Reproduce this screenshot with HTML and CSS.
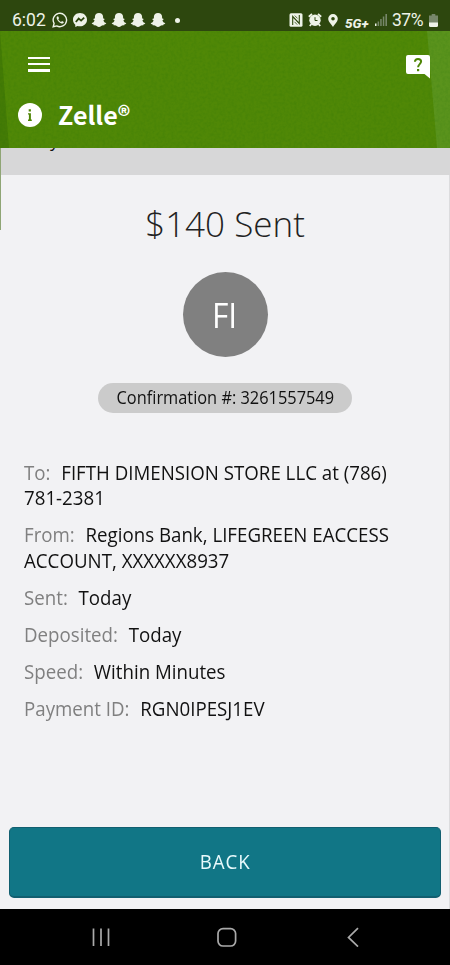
FILE: index.html
```html
<!DOCTYPE html>
<html lang="en">
<head>
    <meta charset="UTF-8">
    <meta name="viewport" content="width=device-width, initial-scale=1.0">
    <title>Zelle</title>
    <link rel="stylesheet" href="styles.css">
</head>
<body>
    <svg width="0" height="0" class="defs">
        <symbol id="snap" viewBox="0 0 16 16">
            <path d="M8 1C5.5 1 3.9 2.6 3.9 4.8V6.4C3.1 6.3 2.4 6.6 2.4 7.2S3.6 8 3.6 8.4C3.2 9.6 2.2 10.7 .8 11.1C.6 12 1.8 12.3 2.6 12.5L2.9 13.4C4.3 13.2 5 13.4 5.8 14C7.1 15.2 8.9 15.2 10.2 14C11 13.4 11.7 13.2 13.1 13.4L13.4 12.5C14.2 12.3 15.4 12 15.2 11.1C13.8 10.7 12.8 9.6 12.4 8.4C12.4 8 13.6 7.7 13.6 7.2S12.9 6.3 12.1 6.4V4.8C12.1 2.6 10.5 1 8 1Z"/>
        </symbol>
    </svg>

    <div class="status-bar">
        <div class="status-left">
            <span class="time">6:02</span>
            <svg class="icon whatsapp" viewBox="0 0 16 16">
                <path d="M1.2 14.8L2.1 11.4A6.7 6.7 0 1 1 4.7 13.9Z" fill="none" stroke="#eef3e8" stroke-width="1.4"/>
                <path d="M5.6 4.3C4.6 4.7 4.4 5.8 4.9 7C5.8 9.2 7.4 10.7 9.5 11.4C10.6 11.7 11.7 11.1 11.8 9.9L10 9L9.1 9.9C7.7 9.3 6.9 8.5 6.3 7.2L7 6.3L6.3 4.4Z"/>
            </svg>
            <svg class="icon messenger" viewBox="0 0 16 16">
                <path d="M8 1C4 1 1 3.9 1 7.7C1 9.8 1.9 11.5 3.3 12.7V15L5.5 14C10.3 15.4 15 12.3 15 7.7C15 3.9 12 1 8 1Z"/>
                <path d="M3.8 10L6.7 6.6L9.1 8.6L12.2 5.6" fill="none" stroke="#2d470e" stroke-width="1.8"/>
            </svg>
            <svg class="icon snap"><use href="#snap"/></svg>
            <svg class="icon snap"><use href="#snap"/></svg>
            <svg class="icon snap"><use href="#snap"/></svg>
            <svg class="icon snap"><use href="#snap"/></svg>
            <span class="dot"></span>
        </div>
        <div class="status-right">
            <svg class="nfc" viewBox="0 0 14 14">
                <rect x=".5" y=".3" width="13" height="13.4" rx="1.5"/>
                <path d="M3.7 12V3.5L10.3 10.5V2" fill="none" stroke="#2d470e" stroke-width="1.1"/>
                <path d="M5.8 2.6L8.5 5.4M5.5 8.8L8.2 11.6" fill="none" stroke="#2d470e" stroke-width=".8"/>
            </svg>
            <svg class="alarm" viewBox="0 0 14 14">
                <circle cx="7" cy="7.2" r="5.7"/>
                <path d="M.8 3.8L4 1M13.2 3.8L10 1M3.2 11.3L1.8 13M10.8 11.3L12.2 13" stroke="#eef3e8" stroke-width="1.8"/>
                <path d="M7 4.2V7.5H9.5" fill="none" stroke="#2d470e" stroke-width="1"/>
            </svg>
            <svg class="pin" viewBox="0 0 10 13">
                <path fill-rule="evenodd" d="M5 0A4.8 4.8 0 0 0 .2 4.8C.2 7.8 3.5 10.5 5 13C6.5 10.5 9.8 7.8 9.8 4.8A4.8 4.8 0 0 0 5 0ZM5 3A1.8 1.8 0 1 1 5 6.6A1.8 1.8 0 0 1 5 3Z"/>
            </svg>
            <span class="network">5G+</span>
            <svg class="signal" viewBox="0 0 12 12">
                <path d="M0 9.5H1.5V12H0Z"/>
                <path class="dim" d="M2.6 7.5H4.1V12H2.6ZM5.2 5H6.7V12H5.2ZM7.8 2.5H9.3V12H7.8ZM10.4 0H12V12H10.4Z"/>
            </svg>
            <span class="percent">37%</span>
            <svg class="battery" viewBox="0 0 9 13">
                <path class="dim" d="M2.7 0H6.3V1.5H9V9H0V1.5H2.7Z"/>
                <path d="M0 8.5H9V11.5Q9 13 7.5 13H1.5Q0 13 0 11.5Z"/>
            </svg>
        </div>
    </div>

    <div class="header">
        <svg class="shade" viewBox="0 0 450 117">
            <filter id="grain" x="0" y="0" width="100%" height="100%">
                <feTurbulence type="fractalNoise" baseFrequency="0.35" numOctaves="2" seed="4"/>
                <feColorMatrix values="0 0 0 0 0  0 0 0 0 0.1  0 0 0 0 0  0.2 0 0 0 -0.07"/>
            </filter>
            <path d="M0 0L9 117H0Z" fill="#447b05"/>
            <path d="M427 0H450V117H437Z" fill="#5a931c"/>
            <rect width="450" height="117" filter="url(#grain)"/>
        </svg>
        <div class="toolbar">
            <div class="menu"><span></span><span></span><span></span></div>
            <svg class="help" viewBox="0 0 24 24">
                <path d="M2 0H22Q24 0 24 2V23.5L18.5 19H2Q0 19 0 17V2Q0 0 2 0Z" fill="#fff"/>
                <path d="M8.9 6.8C9 4.9 10.2 3.9 12 3.9C13.9 3.9 15.1 5 15.1 6.6C15.1 9 12.1 9.3 12.1 12.2" fill="none" stroke="#4e8505" stroke-width="2"/>
                <rect x="11" y="14" width="2.2" height="2.2" fill="#4e8505"/>
            </svg>
        </div>
        <div class="title-row">
            <svg class="info" viewBox="0 0 24 24">
                <circle cx="12" cy="12" r="12" fill="#fff"/>
                <path d="M10.7 6.3H12.9V8.4H10.7ZM10 10.2H12.9V16.6H13.8V18H10V16.6H10.9V11.6H10Z" fill="#4e8505"/>
            </svg>
            <h1>Zelle<span class="reg">®</span></h1>
        </div>
    </div>

    <div class="subheader"><span class="clipped">y</span></div>

    <div class="content">
        <h2>$140 Sent</h2>
        <div class="avatar"><span class="narrow">FI</span></div>
        <div class="confirmation"><span class="narrow">Confirmation #: 3261557549</span></div>

        <div class="details">
            <p><span class="label">To:</span>FIFTH DIMENSION STORE LLC at (786)<br>781-2381</p>
            <p><span class="label">From:</span>Regions Bank, LIFEGREEN EACCESS<br>ACCOUNT, XXXXXX8937</p>
            <p><span class="label">Sent:</span>Today</p>
            <p><span class="label">Deposited:</span>Today</p>
            <p><span class="label">Speed:</span>Within Minutes</p>
            <p><span class="label">Payment ID:</span>RGN0IPESJ1EV</p>
        </div>

        <button class="back"><span class="narrow">BACK</span></button>
    </div>

    <div class="nav-bar">
        <svg viewBox="0 0 20 20"><path d="M2.5 1.5V19M10 1.5V19M17.5 1.5V19"/></svg>
        <svg viewBox="0 0 20 20"><rect x="1" y="1.6" width="17.6" height="17.4" rx="5"/></svg>
        <svg viewBox="0 0 20 20"><path d="M15 1.2L5.5 10.4L15 19.6"/></svg>
    </div>
</body>
</html>
```
FILE: styles.css
```css
* {
    box-sizing: border-box;
}
body {
    font-family: "Open Sans", "Noto Sans", sans-serif;
    background-color: #f2f2f4;
    margin: 0;
    height: 965px;
    display: flex;
    flex-direction: column;
    overflow: hidden;
    color: #111;
}
.defs {
    position: absolute;
}
.status-bar {
    height: 31px;
    flex: none;
    background-color: #2d470e;
    color: #eef3e8;
    fill: #eef3e8;
    display: flex;
    justify-content: space-between;
    align-items: center;
    padding: 9px 12px 0;
    font-family: Roboto, sans-serif;
    font-size: 17.5px;
    line-height: 20px;
}
.status-left,
.status-right {
    display: flex;
    align-items: center;
}
.time {
    width: 40px;
}
.icon {
    width: 16px;
    height: 16px;
    margin-right: 3.5px;
}
.dot {
    width: 5px;
    height: 5px;
    border-radius: 50%;
    background: #eef3e8;
    margin-left: 6px;
}
.nfc {
    width: 14px;
    height: 14px;
    margin-right: 5px;
}
.alarm {
    width: 14px;
    height: 14px;
    margin-right: 6px;
}
.pin {
    width: 10px;
    height: 13px;
    margin-right: 7px;
}
.network {
    font-size: 13.5px;
    font-weight: 800;
    font-style: italic;
    width: 30px;
    padding-top: 5px;
}
.signal {
    width: 12px;
    height: 12px;
    margin-right: 5px;
}
.dim {
    fill: #77876a;
}
.percent {
    width: 37px;
    letter-spacing: -0.5px;
}
.battery {
    width: 9px;
    height: 13px;
}
.header {
    position: relative;
    height: 117px;
    flex: none;
    background-color: #508806;
}
.shade {
    position: absolute;
    top: 0;
    left: 0;
    width: 450px;
    height: 117px;
}
.toolbar,
.title-row {
    position: relative;
    display: flex;
}
.toolbar {
    justify-content: space-between;
    padding: 24px 20px 0 28px;
}
.menu {
    width: 22px;
    display: flex;
    flex-direction: column;
    gap: 4px;
    padding-top: 1.5px;
}
.menu span {
    height: 2.4px;
    background: #fff;
}
.help {
    width: 24px;
    height: 24px;
}
.title-row {
    align-items: center;
    gap: 16px;
    padding: 18px 18px 0;
    height: 54px;
}
.info {
    width: 24px;
    height: 24px;
}
h1 {
    margin: -2px 0 0;
    font-family: "Noto Sans CJK SC", sans-serif;
    font-size: 25px;
    line-height: 36px;
    font-weight: 700;
    color: #fff;
}
.subheader {
    height: 27px;
    flex: none;
    background-color: #d7d7d8;
    overflow: hidden;
    padding-left: 50px;
}
.clipped {
    display: block;
    font-size: 18px;
    line-height: 20px;
    margin-top: -18px;
}
.content {
    position: relative;
    flex: 1;
    display: flex;
    flex-direction: column;
    align-items: center;
    padding: 0 8px 11px 9px;
    border-right: 1px solid #dcdcde;
}
/* thin strip left showing under the header */
.content::before {
    content: "";
    position: absolute;
    top: -27px;
    left: 0;
    width: 1px;
    height: 82px;
    background: #8fa575;
}
h2 {
    margin: 24px 0 0;
    font-size: 35px;
    line-height: 50px;
    font-weight: 300;
    color: #222;
}
.narrow {
    display: inline-block;
    transform: scaleX(0.935);
}
.avatar {
    width: 85px;
    height: 85px;
    margin-top: 23px;
    border-radius: 50%;
    background: #808080;
    color: #fff;
    font-size: 34px;
    line-height: 86px;
    text-align: center;
}
.confirmation {
    width: 254px;
    height: 30px;
    margin-top: 26px;
    border-radius: 15px;
    background: #cbcbcb;
    font-size: 17.5px;
    line-height: 28px;
    text-align: center;
    white-space: nowrap;
}
.details {
    align-self: stretch;
    margin: 47px 0 0 15px;
    font-size: 20px;
    line-height: 25.3px;
    white-space: nowrap;
    transform: scaleX(0.935);
    transform-origin: left top;
}
.details p {
    margin: 0 0 11.8px;
}
.label {
    color: #808080;
    margin-right: 11.5px;
}
.back {
    align-self: stretch;
    height: 71px;
    margin-top: auto;
    padding-bottom: 3px;
    border: 1px solid #125f70;
    border-bottom-width: 2px;
    border-radius: 5px;
    background: #117686;
    color: #e9fafc;
    font-family: inherit;
    font-size: 20px;
    letter-spacing: 1px;
}
.nav-bar {
    height: 56px;
    flex: none;
    background: #000;
    display: flex;
    justify-content: space-between;
    align-items: center;
    padding: 0 87px 0 91px;
}
.nav-bar svg {
    width: 20px;
    height: 20px;
    fill: none;
    stroke: #aaa;
    stroke-width: 1.7;
}
```
